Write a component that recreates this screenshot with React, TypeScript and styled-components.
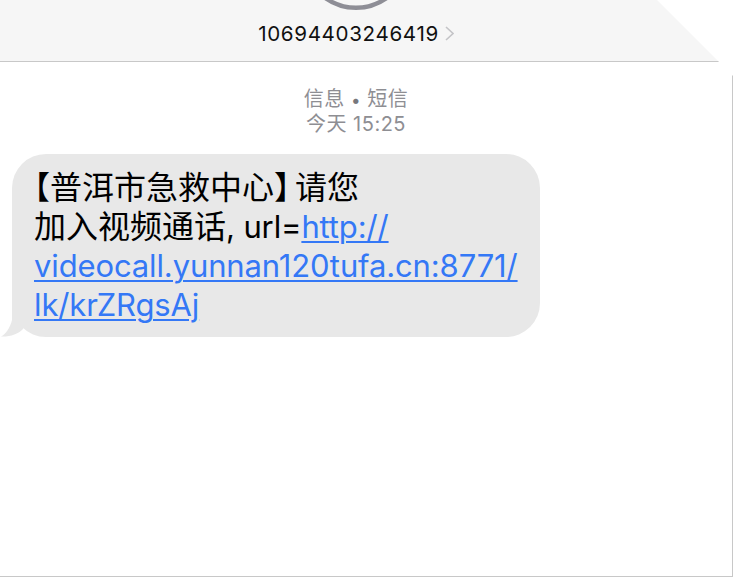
import React from "react";
import styled, { createGlobalStyle } from "styled-components";

const GlobalStyle = createGlobalStyle`
  html, body {
    margin: 0;
    padding: 0;
    background: #fff;
  }
`;

const Screen = styled.div`
  width: 733px;
  height: 577px;
  box-sizing: border-box;
  display: flex;
  flex-direction: column;
  background: #fff;
  border-right: 1px solid #c8c8c8;
  border-bottom: 1px solid #c8c8c8;
  clip-path: polygon(0 0, 657px 0, 733px 76px, 733px 577px, 0 577px);
  font-family: Inter, "Noto Sans CJK SC", sans-serif;
`;

const Header = styled.header`
  height: 62px;
  box-sizing: border-box;
  flex-shrink: 0;
  display: flex;
  flex-direction: column;
  align-items: center;
  padding-right: 20px;
  background: #f6f6f6;
  border-bottom: 1px solid #c8c8c8;
`;

const Contact = styled.div`
  display: flex;
  align-items: center;
  gap: 6px;
  margin-top: 10px;
  color: #111;
  font-size: 20.6px;
  line-height: 25px;
  letter-spacing: 0.65px;
`;

const Meta = styled.div`
  height: 50px;
  margin-top: 25px;
  text-align: center;
  padding-right: 20px;
  color: #8e8e93;
  font-size: 20px;
  line-height: 25px;
  letter-spacing: 0.5px;
`;

const Dot = styled.span`
  font-size: 17px;
  line-height: 1;
  color: #77777c;
`;

const Bubble = styled.div`
  position: relative;
  width: 528px;
  height: 183px;
  box-sizing: border-box;
  margin: 17px 0 0 12px;
  padding: 14px 0 0 22px;
  background: #e8e8e8;
  border-radius: 34px;
  color: #000;
  font-size: 31px;
  line-height: 39px;
  letter-spacing: -0.13px;
`;

const Cjk = styled.span`
  font-size: 32px;
  letter-spacing: 0;
`;

const OpenBracket = styled.span`
  margin-left: -16px;
`;

const CloseBracket = styled.span`
  letter-spacing: -11px;
`;

const Url = styled.span`
  color: #3478f6;
  text-decoration: underline;
  text-decoration-thickness: 2px;
  text-underline-offset: 3px;
`;

const Tail = styled.svg`
  position: absolute;
  left: -12px;
  bottom: 0;
`;

const Avatar = () => (
  <svg width="66" height="11" viewBox="0 0 66 11" style={{ display: "block" }}>
    <path d="M1 -3 A53 53 0 0 0 65 -3" fill="none" stroke="#8e8e96" strokeWidth="4.5" />
  </svg>
);

const Chevron = () => (
  <svg width="9" height="15" viewBox="0 0 9 15">
    <path d="M1 1 L8 7.5 L1 14" fill="none" stroke="#c4c4c7" strokeWidth="1.6" />
  </svg>
);

const App = () => (
  <>
    <GlobalStyle />
    <Screen>
      <Header>
        <Avatar />
        <Contact>
          10694403246419
          <Chevron />
        </Contact>
      </Header>
      <Meta>
        信息 <Dot>•</Dot> 短信
        <br />
        今天 15:25
      </Meta>
      <Bubble>
        <Cjk>
          <OpenBracket>【</OpenBracket>普洱市急救中心<CloseBracket>】</CloseBracket>请您
        </Cjk>
        <br />
        <Cjk>加入视频通话</Cjk>, url=<Url>http://</Url>
        <br />
        <Url>videocall.yunnan120tufa.cn:8771/</Url>
        <br />
        <Url>lk/krZRgsAj</Url>
        <Tail width="34" height="40" viewBox="0 0 34 40">
          <path d="M12 6 L12 23 C10 31 6 37 1 39.5 C10 40 18 37 23 32 L34 10 Z" fill="#e8e8e8" />
        </Tail>
      </Bubble>
    </Screen>
  </>
);

export default App;
